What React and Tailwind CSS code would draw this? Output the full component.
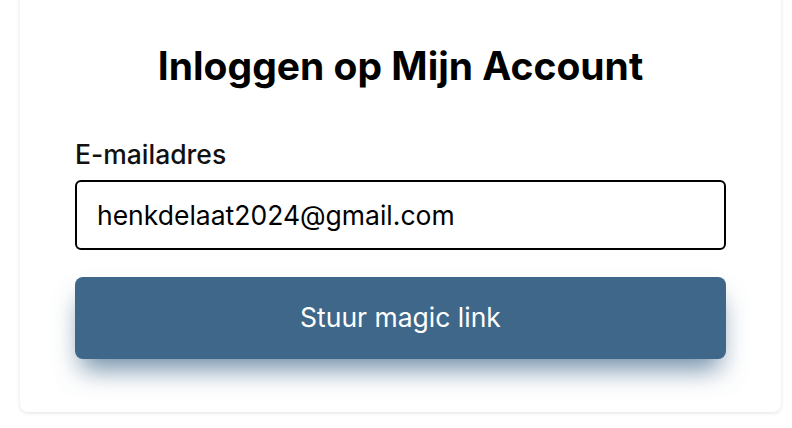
export default function App() {
  return (
    <div className="min-h-screen bg-white font-['Inter',sans-serif] pt-px">
      <div className="ml-[20px] w-[761px] -mt-[20px] bg-white rounded-lg shadow-[0_1px_4px_rgba(0,0,0,0.12)] px-[55px] pt-[62px] pb-[53px]">
        <h2 className="text-[39px] leading-[46px] font-bold text-black text-center">
          Inloggen op Mijn Account
        </h2>
        <form className="mt-[50px]" onSubmit={e => e.preventDefault()}>
          <label className="block text-[26.5px] leading-[30px] text-[#111] font-medium">E-mailadres</label>
          <input
            defaultValue="henkdelaat2024@gmail.com"
            className="mt-[11px] block w-full h-[70px] px-[20px] border-2 border-black rounded-md text-[26.5px] text-black outline-none"
          />
          <button className="mt-[27px] w-full h-[82px] rounded-lg bg-[#3f6789] text-white text-[26.5px] shadow-[0_16px_26px_-6px_rgba(63,103,137,0.75)]">
            Stuur magic link
          </button>
        </form>
      </div>
    </div>
  );
}
